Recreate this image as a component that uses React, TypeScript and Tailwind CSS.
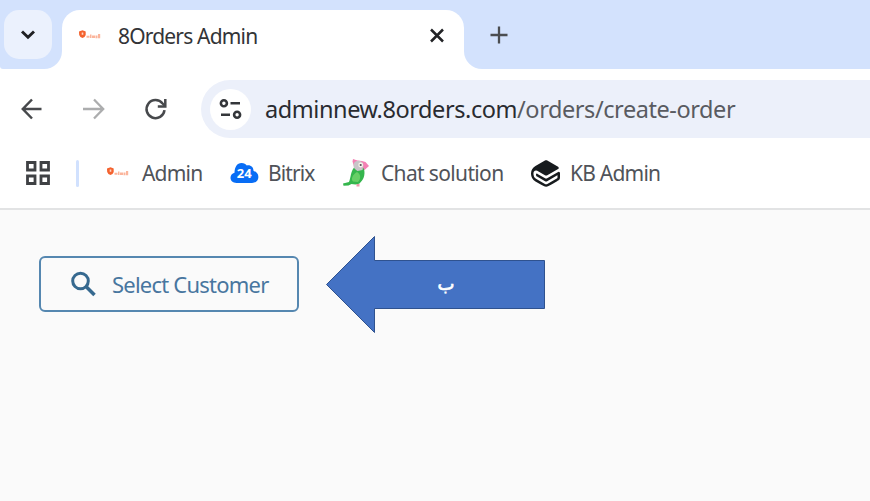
import React from "react";
import { SiGitbook } from "react-icons/si";

function BrandMark() {
  return (
    <svg width="24" height="14" viewBox="0 0 24 14" className="block shrink-0">
      <path d="M1 2.500 4.500 1.300 7.700 2.500v3.500q-.8 2.300-3.200 3-2.600-.7-3.300-3z" fill="#f4622e" />
      <path d="M3.700 3.500h1.600v2.300H3.700z" fill="#ffd5c5" />
      <path d="M8.500 6.800h3v2h-3zM12 5.500h1.500v3.500H12zM14 6.500h3v2.500h-3zM17.500 6.500h2v2.800h-2zM20 5h2.200v4.300H20z" fill="#fbb59c" />
    </svg>
  );
}

function TabStrip() {
  return (
    <div className="flex h-[69px] bg-white">
      <div className="w-[62px] rounded-br-[18px] rounded-bl-[3px] bg-[#d3e2fd] pt-[10px] pl-[4px]">
        <div className="flex h-[49px] w-[48px] items-center justify-center rounded-[15px] bg-[#ebf1fd]">
          <svg width="16" height="12" viewBox="0 0 16 12" className="block">
            <path d="m2 2.500 6 5.800 6-5.800" fill="none" stroke="#1f2023" strokeWidth="2.900" />
          </svg>
        </div>
      </div>
      <div className="w-[402px] bg-[#d3e2fd] pt-[10px]">
        <div className="flex h-[59px] items-center rounded-t-[18px] bg-white pb-[8px] pl-[16px]">
          <BrandMark />
          <span className="ml-[16px] w-[311px] text-[21px] leading-[30px] tracking-[-0.820px] whitespace-nowrap text-[#333437]">8Orders Admin</span>
          <svg width="16" height="16" viewBox="0 0 16 16" className="block shrink-0">
            <path d="m2 1.500 12 12M14 1.500l-12 12" stroke="#222326" strokeWidth="2.500" />
          </svg>
        </div>
      </div>
      <div className="flex-1 rounded-bl-[18px] bg-[#d3e2fd] pt-[26px] pl-[26px]">
        <svg width="18" height="18" viewBox="0 0 18 18" className="block">
          <path d="M9 .5v17M.5 9h17" stroke="#4b4d51" strokeWidth="2.300" />
        </svg>
      </div>
    </div>
  );
}

function Toolbar() {
  return (
    <div className="flex h-[69px] items-center pt-[11px]">
      <div className="flex h-[58px] w-[201px] items-center pl-[21px]">
        <svg width="22" height="22" viewBox="0 0 22 22" className="block">
          <path d="M20.500 11H2M11 1.500 1.800 11l9.200 9.500" fill="none" stroke="#47494c" strokeWidth="2.500" />
        </svg>
        <svg width="22" height="22" viewBox="0 0 22 22" className="ml-[40px] block">
          <path d="M0 11h20M11 1.500l9.200 9.500L11 20.500" fill="none" stroke="#acadae" strokeWidth="2.300" />
        </svg>
        <svg width="24" height="24" viewBox="0 0 24 24" className="ml-[39px] block">
          <path d="M20.500 13.200A9 9 0 1 1 18.600 6.500L21 9" fill="none" stroke="#47494c" strokeWidth="2.500" />
          <path d="M21.300 2v7.500h-7.500" fill="none" stroke="#47494c" strokeWidth="2.500" />
        </svg>
      </div>
      <div className="flex h-[58px] flex-1 items-center rounded-l-full bg-[#ecf0fa] pl-[9px]">
        <div className="flex size-[41px] items-center justify-center rounded-full bg-white">
          <svg width="24" height="22" viewBox="0 0 24 22" className="block">
            <g fill="none" stroke="#34363a" strokeWidth="2.600">
              <circle cx="4.900" cy="5.300" r="3" />
              <path d="M11.500 5.300H21M2 16.700h9" />
              <circle cx="18.100" cy="16.700" r="3" />
            </g>
          </svg>
        </div>
        <span className="ml-[14px] text-[23.500px] leading-[34px] tracking-[-0.430px] whitespace-nowrap text-[#595b61]">
          <span className="text-[#292b30]">adminnew.8orders.com</span>/orders/create-order
        </span>
      </div>
    </div>
  );
}

function Cloud() {
  return (
    <svg width="30" height="24" viewBox="0 0 30 24" className="block">
      <path d="M6.500 22C2.800 22 .5 19.800.5 16.800c0-2.600 1.600-4.500 4-5C4.700 6 7 2 11.500 2c2.700 0 4.100 1 5.300 2.500 3.800-.8 6.600 1.500 6.800 5.500 2.800.8 4.800 2.900 4.800 5.900 0 3.800-2.700 6.100-6.400 6.100z" fill="#086df5" />
      <text x="14.300" y="17.300" fontSize="13" fontWeight="700" fill="white" textAnchor="middle">24</text>
    </svg>
  );
}

function Parrot() {
  return (
    <svg width="28" height="30" viewBox="0 0 28 30" className="block">
      <path d="M10.500 3.500 11 1l4.500 1.500L20 3l3.500 1 3.500 4-4.500 4-10-2z" fill="#f481b4" />
      <path d="M12 9.500c4-2 9-1 10 1.500 1.500 6-.5 11-4.500 14.500-3 1.500-6 .8-8 .5l-3 1.500-5 .3-.5-2.300 6-1.500C9 19 8.500 14 12 9.500" fill="#35b64d" />
      <path d="M15 14c4 2 4 7 1 10l-5-.5c-2.500-2-.5-7 4-9.500" fill="#67cf66" />
      <path d="M12 5c3-4 9-2 9.500 2l-1 5-5 1c-3-2-5-4-3.500-8" fill="#c9c5c9" />
      <circle cx="18.700" cy="7" r="2.400" fill="#f6f3e9" />
      <circle cx="18.700" cy="7" r="1.100" fill="#55515a" />
      <path d="M14.500 26h3v2.500h-3z" fill="#e99aaa" />
    </svg>
  );
}

function Bookmarks() {
  const label = "text-[21px] leading-[30px] whitespace-nowrap";
  return (
    <div className="flex h-[72px] items-center border-b-2 border-[#e2e3e4] pl-[25px] text-[#505359]">
      <svg width="26" height="26" viewBox="0 0 26 26" className="block">
        <path d="M2.500 2.500h7.500V10H2.500zM16 2.500h7.500V10H16zM2.500 16h7.500v7.500H2.500zM16 16h7.500v7.500H16z" fill="none" stroke="#3f4144" strokeWidth="2.800" />
      </svg>
      <div className="ml-[25px] h-[27px] w-[3px] rounded-full bg-[#d1e1fe]" />
      <div className="ml-[27px] flex w-[124px] items-center gap-[12px]">
        <BrandMark />
        <span className={label + " tracking-[-0.800px]"}>Admin</span>
      </div>
      <div className="flex w-[112px] items-center gap-[8px]">
        <Cloud />
        <span className={label + " tracking-[-0.900px]"}>Bitrix</span>
      </div>
      <div className="flex w-[188px] items-center gap-[11px]">
        <Parrot />
        <span className={label + " tracking-[-0.650px]"}>Chat solution</span>
      </div>
      <div className="flex items-center gap-[10px] pl-[1px]">
        <SiGitbook size={29} className="block text-[#171b1e]" />
        <span className={label + " tracking-[-0.780px]"}>KB Admin</span>
      </div>
    </div>
  );
}

function OrderPage() {
  return (
    <main className="flex flex-1 items-start bg-[#fafafa] pt-[25px] pl-[39px]">
      <button className="mt-[21px] flex h-[56px] w-[260px] items-center rounded-[6px] border-2 border-[#5587b0] pl-[29px] text-[#48769f]">
        <svg width="27" height="27" viewBox="0 0 27 27" className="block">
          <circle cx="10.500" cy="10" r="7.800" fill="none" stroke="#36698f" strokeWidth="3" />
          <path d="m16 15.500 8.500 8.500" stroke="#36698f" strokeWidth="3.600" />
        </svg>
        <span className="ml-[15px] text-[22px] leading-[30px] tracking-[-0.780px] whitespace-nowrap">Select Customer</span>
      </button>
      <div className="ml-[26px] grid h-[98px] w-[220px] place-items-center">
        <svg width="220" height="98" viewBox="0 0 220 98" className="col-start-1 row-start-1 block">
          <path d="M1.500 49.500 49.500 1.500v24h170v48h-170v24z" fill="#4472c4" stroke="#2f528f" strokeWidth="1" />
        </svg>
        <span dir="rtl" className="col-start-1 row-start-1 mr-[-22px] font-['DejaVu_Sans',sans-serif] text-[18px] leading-[24px] text-white [-webkit-text-stroke:0.7px_white]">ب</span>
      </div>
    </main>
  );
}

export default function App() {
  return (
    <div className="flex h-[501px] w-[870px] flex-col overflow-hidden bg-white font-['Noto_Sans','Open_Sans',sans-serif]">
      <TabStrip />
      <Toolbar />
      <Bookmarks />
      <OrderPage />
    </div>
  );
}
